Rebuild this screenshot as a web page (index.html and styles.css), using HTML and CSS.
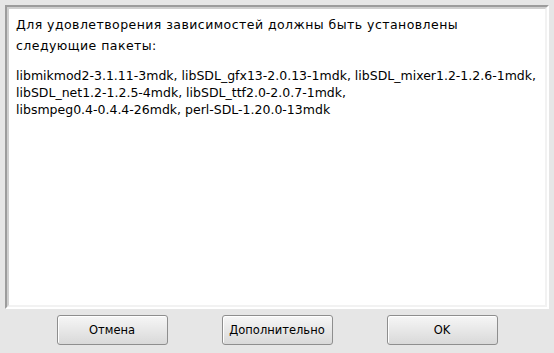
FILE: index.html
```html
<!DOCTYPE html>
<html lang="ru">
<head>
<meta charset="utf-8">
<link rel="stylesheet" href="styles.css">
</head>
<body>
<div class="dialog">
  <div class="frame">
    <div class="content">
      <p class="line l1">Для удовлетворения зависимостей должны быть установлены</p>
      <p class="line l2">следующие пакеты:</p>
      <p class="packages">libmikmod2-3.1.11-3mdk, libSDL_gfx13-2.0.13-1mdk, libSDL_mixer1.2-1.2.6-1mdk,<br>libSDL_net1.2-1.2.5-4mdk, libSDL_ttf2.0-2.0.7-1mdk,<br>libsmpeg0.4-0.4.4-26mdk, perl-SDL-1.20.0-13mdk</p>
    </div>
  </div>
  <div class="buttons">
    <button class="btn">Отмена</button>
    <button class="btn">Дополнительно</button>
    <button class="btn">OK</button>
  </div>
</div>
</body>
</html>
```
FILE: styles.css
```css
html, body {
  margin: 0;
  padding: 0;
  background: #e6e6e6;
  width: 554px;
  height: 353px;
  overflow: hidden;
}
.dialog {
  padding: 5px 5px 0 5px;
  font-family: "DejaVu Sans", sans-serif;
  font-size: 12.5px;
  color: #000;
}
.frame {
  height: 304px;
  border-style: solid;
  border-width: 2px;
  border-color: #9c9c9c #ffffff #ffffff #9c9c9c;
  box-sizing: border-box;
}
.content {
  height: 100%;
  box-sizing: border-box;
  background: #fff;
  border-style: solid;
  border-width: 2px;
  border-color: #cfcfcf #f2f2f2 #f2f2f2 #cfcfcf;
  padding: 5px 0 0 7px;
  white-space: nowrap;
}
.line {
  margin: 0;
  line-height: 21px;
  letter-spacing: 0.45px;
}
.packages {
  margin: 11px 0 0 0;
  line-height: 17px;
}
.buttons {
  display: flex;
  justify-content: center;
  gap: 54px;
  padding-top: 6px;
}
.btn {
  width: 111px;
  height: 30px;
  border: 1px solid #8e8e8e;
  border-radius: 3px;
  background: linear-gradient(#f6f6f6, #d9d9d9);
  box-shadow: inset 1px 1px 0 #ffffff;
  font-family: "DejaVu Sans", sans-serif;
  font-size: 11.5px;
  color: #000;
  padding: 0;
}
```
